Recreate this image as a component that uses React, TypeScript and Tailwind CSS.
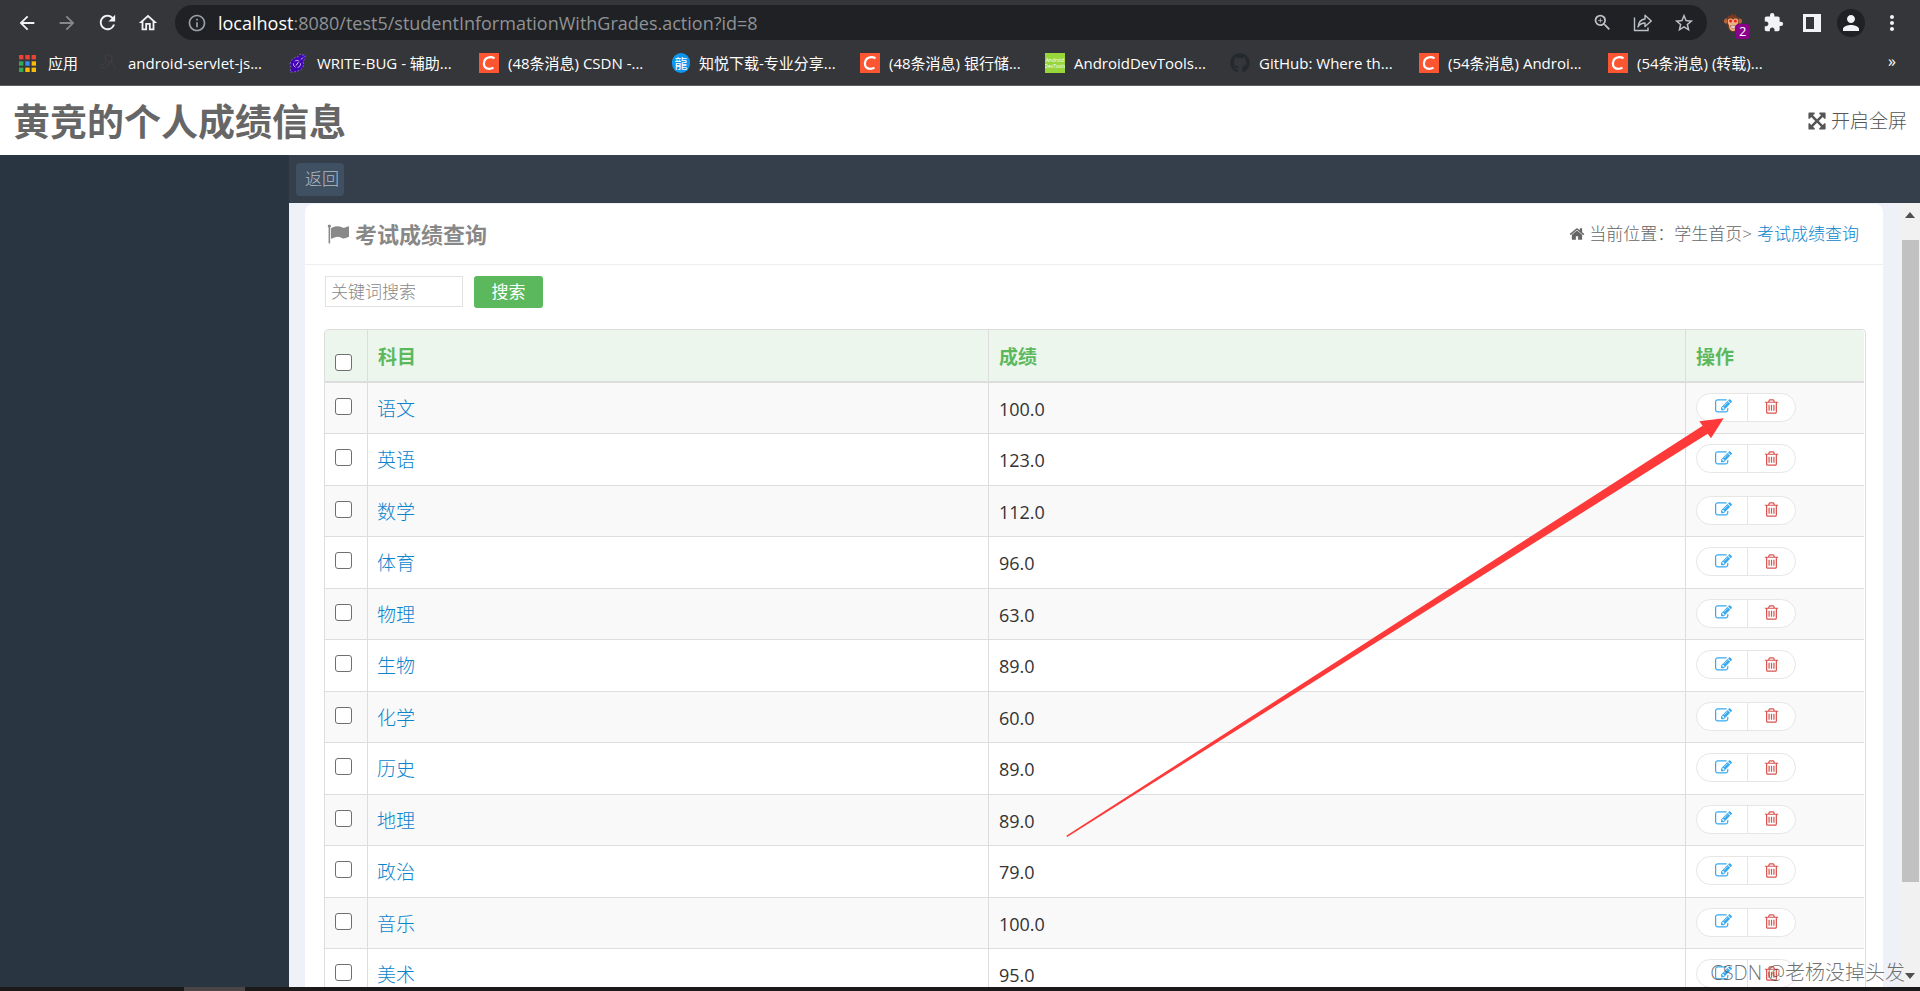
import type { ReactNode } from "react";
import { FaGithub } from "react-icons/fa";
import {
  MdArrowBack,
  MdArrowForward,
  MdExtension,
  MdInfoOutline,
  MdMoreVert,
  MdOutlineHome,
  MdPerson,
  MdRefresh,
  MdStarBorder,
  MdZoomIn,
} from "react-icons/md";

const glyphs = {
  edit: "M888 1184l116-116-152-152-116 116v56h96v96h56zm440-720q-16-16-33 1l-350 350q-17 17-1 33t33-1l350-350q17-17 1-33zm80 594v190q0 119-84.5 203.5t-203.5 84.5h-832q-119 0-203.5-84.5t-84.5-203.5v-832q0-119 84.5-203.5t203.5-84.5h832q63 0 117 25 15 7 18 23 3 17-9 29l-49 49q-14 14-32 8-23-6-45-6h-832q-66 0-113 47t-47 113v832q0 66 47 113t113 47h832q66 0 113-47t47-113v-126q0-13 9-22l64-64q15-15 35-7t20 29zm-96-738l288 288-672 672h-288v-288zm444 132l-92 92-288-288 92-92q28-28 68-28t68 28l152 152q28 28 28 68t-28 68z",
  trash:
    "M704 736v576q0 14-9 23t-23 9h-64q-14 0-23-9t-9-23v-576q0-14 9-23t23-9h64q14 0 23 9t9 23zm256 0v576q0 14-9 23t-23 9h-64q-14 0-23-9t-9-23v-576q0-14 9-23t23-9h64q14 0 23 9t9 23zm256 0v576q0 14-9 23t-23 9h-64q-14 0-23-9t-9-23v-576q0-14 9-23t23-9h64q14 0 23 9t9 23zm128 724v-948h-896v948q0 22 7 40.5t14.5 27 10.5 8.5h832q3 0 10.5-8.5t14.5-27 7-40.5zm-672-1076h448l-48-117q-7-9-17-11h-317q-10 2-17 11zm928 32v64q0 14-9 23t-23 9h-96v948q0 83-47 143.5t-113 60.5h-832q-66 0-113-58.5t-47-141.5v-952h-96q-14 0-23-9t-9-23v-64q0-14 9-23t23-9h309l70-167q15-37 54-63t79-26h320q40 0 79 26t54 63l70 167h309q14 0 23 9t9 23z",
  expand:
    "M1411 541l-355 355 355 355 144-144q29-31 70-14 39 17 39 59v448q0 26-19 45t-45 19h-448q-42 0-59-40-17-39 14-69l144-144-355-355-355 355 144 144q31 30 14 69-17 40-59 40h-448q-26 0-45-19t-19-45v-448q0-42 40-59 39-17 69 14l144 144 355-355-355-355-144 144q-19 19-45 19-12 0-24-5-40-17-40-59v-448q0-26 19-45t45-19h448q42 0 59 40 17 39-14 69l-144 144 355 355 355-355-144-144q-31-30-14-69 17-40 59-40h448q26 0 45 19t19 45v448q0 42-39 59-13 5-25 5-26 0-45-19z",
  home: "M1472 992v480q0 26-19 45t-45 19h-384v-384h-256v384h-384q-26 0-45-19t-19-45v-480q0-1 .5-3t.5-3l575-474 575 474q1 2 1 6zm223-69l-62 74q-8 9-21 11h-3q-13 0-21-7l-692-577-692 577q-12 8-24 7-13-2-21-11l-62-74q-8-10-7-23.5t11-21.5l719-599q32-26 76-26t76 26l244 204v-195q0-14 9-23t23-9h192q14 0 23 9t9 23v408l219 182q10 8 11 21.5t-7 23.5z",
  flag: "M320 256q0 72-64 110v1266q0 13-9.5 22.5t-22.5 9.5h-64q-13 0-22.5-9.5t-9.5-22.5v-1266q-64-38-64-110 0-53 37.5-90.5t90.5-37.5 90.5 37.5 37.5 90.5zm1472 64v763q0 25-12.5 38.5t-39.5 27.5q-215 116-369 116-61 0-123.5-22t-108.5-48-115.5-48-142.5-22q-192 0-464 146-17 9-33 9-26 0-45-19t-19-45v-742q0-32 31-55 21-14 79-43 236-120 421-120 107 0 200 29t219 88q38 19 88 19 54 0 117.5-21t110-47 88-47 54.5-21q26 0 45 19t19 45z",
};

function Glyph({ name, className }: { name: keyof typeof glyphs; className: string }) {
  return (
    <svg viewBox="0 0 1792 1792" fill="currentColor" className={className} aria-hidden="true">
      <path d={glyphs[name]} />
    </svg>
  );
}

function AppsIcon() {
  const colors = ["#ea4335", "#ea4335", "#ea4335", "#34a853", "#4285f4", "#fbbc04", "#34a853", "#fbbc04", "#fbbc04"];
  return (
    <svg viewBox="0 0 17 17" className="size-[17px] shrink-0" aria-hidden="true">
      {colors.map((c, i) => (
        <rect key={i} x={(i % 3) * 6.3} y={Math.floor(i / 3) * 6.3} width="4.4" height="4.4" fill={c} />
      ))}
    </svg>
  );
}

function CsdnIcon() {
  return (
    <svg viewBox="0 0 20 20" className="size-5 shrink-0" aria-hidden="true">
      <rect width="20" height="20" fill="#fc5531" />
      <path d="M15.5 5.3C14 4.3 12.500 4 11 4.100 7.300 4.400 5.200 7 4.900 10.300 4.700 13.600 6.600 15.700 10 15.800c1.700 0 3.200-.4 4.500-1.200" fill="none" stroke="#fff" strokeWidth="2.200" />
    </svg>
  );
}

function FigureIcon() {
  return (
    <svg viewBox="0 0 20 20" className="size-5 shrink-0" fill="none" stroke="#453e3c" aria-hidden="true">
      <circle cx="9.500" cy="5" r="3.500" />
      <path d="M7 8.500 4 12M2 11c-1 5 2 6 6 3l3-5M13 3c1 4-1 6-3 7M10 9c3 0 5 3 6 8" />
    </svg>
  );
}

function BugIcon() {
  return (
    <svg viewBox="0 0 20 20" className="size-5 shrink-0" aria-hidden="true">
      <path d="M2 11C3 6 7 4 10 4l2-3 2 1 3 0 0 4-2 2c2 5-1 9-5 10l-4 1-4 0 1-4z" fill="#4203b5" stroke="#8a7bb5" strokeWidth=".8" strokeDasharray="2 1.500" />
      <circle cx="9" cy="11" r="3.600" fill="none" stroke="#b5a5e0" strokeWidth="1" strokeDasharray="5 2" />
      <path d="M8 12.500 10.500 9M13 6.500l2-2" stroke="#d9cff5" />
    </svg>
  );
}

function DragonIcon() {
  return (
    <span className="grid h-5 w-[18px] shrink-0 place-items-center rounded-full bg-[#0c96ee] text-[13px] leading-none text-white">
      龍
    </span>
  );
}

function DevToolsIcon() {
  return (
    <span className="flex size-5 shrink-0 flex-col items-center justify-center overflow-hidden bg-[#97d73c] text-[5px] leading-[6px] text-white">
      <span>Android</span>
      <span>DevTools</span>
    </span>
  );
}

function ShareIcon() {
  return (
    <svg viewBox="0 0 20 20" className="size-5" fill="none" stroke="currentColor" strokeWidth="1.400" aria-hidden="true">
      <path d="M1.500 4.500v13h13.500v-3" />
      <path d="M5 14c.5-5 3-7.500 7-8V2.200l6.300 5.800-6.300 5.500V10c-3.500 0-5.500 1.200-7 4z" strokeLinejoin="round" />
    </svg>
  );
}

function MonkeyIcon() {
  return (
    <svg viewBox="0 0 20 20" className="size-5" aria-hidden="true">
      <circle cx="3.500" cy="8" r="2.600" fill="#b5643a" />
      <circle cx="16.500" cy="8" r="2.600" fill="#b5643a" />
      <path d="M4 5 6 2l1.500 1L9 .5l1.500 2 2-1.500L13 3l2 1 1 6-2 7-4 2.500L6 17 4 10z" fill="#7a3a1d" />
      <path d="M5 7c1-2 4-2 5 0 1-2 4-2 5 0 1 3-1 4-1 6 0 3-2 5-4 5s-4-2-4-5c0-2-2-3-1-6z" fill="#eeb083" />
      <circle cx="7.600" cy="8" r="1.500" fill="#f01f1f" />
      <circle cx="12.400" cy="8" r="1.500" fill="#f01f1f" />
      <path d="M7 13h6c0 3-5.500 3-6 0z" fill="#fff" stroke="#7a3a1d" strokeWidth=".6" />
    </svg>
  );
}

const bookmarks: { label: string; icon: ReactNode; width: string }[] = [
  { label: "android-servlet-js...", icon: <FigureIcon />, width: "w-[189px]" },
  { label: "WRITE-BUG - 辅助...", icon: <BugIcon />, width: "w-[191px]" },
  { label: "(48条消息) CSDN -...", icon: <CsdnIcon />, width: "w-[193px]" },
  { label: "知悦下载-专业分享...", icon: <DragonIcon />, width: "w-[188px]" },
  { label: "(48条消息) 银行储...", icon: <CsdnIcon />, width: "w-[185px]" },
  { label: "AndroidDevTools...", icon: <DevToolsIcon />, width: "w-[185px]" },
  { label: "GitHub: Where th...", icon: <FaGithub className="size-5 shrink-0 text-[#24292e]" />, width: "w-[189px]" },
  { label: "(54条消息) Androi...", icon: <CsdnIcon />, width: "w-[189px]" },
  { label: "(54条消息) (转载)...", icon: <CsdnIcon />, width: "w-[185px]" },
];

const grades = [
  ["语文", "100.0"],
  ["英语", "123.0"],
  ["数学", "112.0"],
  ["体育", "96.0"],
  ["物理", "63.0"],
  ["生物", "89.0"],
  ["化学", "60.0"],
  ["历史", "89.0"],
  ["地理", "89.0"],
  ["政治", "79.0"],
  ["音乐", "100.0"],
  ["美术", "95.0"],
];

function BrowserBar() {
  return (
    <div className="shrink-0 border-b border-[#5c5d61] bg-[#35363a] text-[#f1f3f4]">
      <div className="flex h-[45px] items-center pr-4 pl-4">
        <div className="flex w-[159px] shrink-0 items-center gap-[18px]">
          <button aria-label="后退"><MdArrowBack className="size-[22px]" /></button>
          <button aria-label="前进" className="text-[#87888b]"><MdArrowForward className="size-[22px]" /></button>
          <button aria-label="刷新"><MdRefresh className="size-[23px]" /></button>
          <button aria-label="主页"><MdOutlineHome className="size-[22px]" /></button>
        </div>
        <div className="flex h-[35px] min-w-0 flex-1 items-center rounded-full bg-[#202124] pr-3 pl-3 text-[#9aa0a6]">
          <MdInfoOutline className="size-5 shrink-0" />
          <div className="min-w-0 flex-1 truncate pl-[11px] text-[18px] leading-6 text-[#8f9296]">
            <span className="text-white">localhost</span>:8080/test5/studentInformationWithGrades.action?id=8
          </div>
          <div className="flex items-center gap-5 text-[#bdc1c6]">
            <button aria-label="缩放"><MdZoomIn className="size-[21px]" /></button>
            <button aria-label="分享"><ShareIcon /></button>
            <button aria-label="收藏"><MdStarBorder className="size-[22px]" /></button>
          </div>
        </div>
        <div className="ml-4 flex shrink-0 items-center">
          <button aria-label="扩展 2" className="relative mr-5">
            <MonkeyIcon />
            <span className="absolute top-[11px] left-[12px] rounded-sm bg-[#8b008b] px-1 text-[13px] leading-[15px] text-white">2</span>
          </button>
          <button aria-label="扩展程序" className="mr-[19px]"><MdExtension className="size-[21px]" /></button>
          <button aria-label="侧边栏" className="mr-4">
            <svg viewBox="0 0 18 18" className="size-[18px]" aria-hidden="true">
              <path fill="currentColor" fillRule="evenodd" d="M0 0h18v18H0zM3 3v12h8V3z" />
            </svg>
          </button>
          <button aria-label="用户" className="mr-[15px] grid size-7 place-items-center rounded-full bg-[#202124]">
            <MdPerson className="size-6" />
          </button>
          <button aria-label="菜单"><MdMoreVert className="size-6" /></button>
        </div>
      </div>
      <nav className="flex h-10 items-center pr-6 pb-1 pl-[19px] text-[15px] leading-5 text-white">
        <a href="#apps" className="flex w-[80px] shrink-0 items-center gap-3 whitespace-nowrap">
          <AppsIcon />
          应用
        </a>
        {bookmarks.map((b) => (
          <a key={b.label} href="#bookmark" className={`flex shrink-0 items-center gap-[9px] whitespace-nowrap ${b.width}`}>
            {b.icon}
            {b.label}
          </a>
        ))}
        <button aria-label="更多书签" className="ml-auto pb-1 text-[16px]">»</button>
      </nav>
    </div>
  );
}

const checkbox =
  "block size-[17px] appearance-none rounded-[3px] border border-[#6f6f6f] bg-white checked:bg-[#1a73e8]";

function GradeTable() {
  return (
    <div className="rounded border border-[#ddd] pr-px">
      <table className="w-full table-fixed border-separate border-spacing-0 text-left">
        <colgroup>
          <col className="w-[43px]" />
          <col className="w-[40.35%]" />
          <col />
          <col className="w-[178px]" />
        </colgroup>
        <thead>
          <tr className="h-[53px] text-[19px] leading-6 text-[#5cb85c]">
            <th className="rounded-tl border-r border-b-2 border-[#ddd] bg-[#ecf6ed] pt-[14px] pl-[10px]">
              <input type="checkbox" aria-label="全选" className={checkbox} />
            </th>
            <th className="border-r border-b-2 border-[#ddd] bg-[#ecf6ed] pt-0.5 pl-[10px]">科目</th>
            <th className="border-r border-b-2 border-[#ddd] bg-[#ecf6ed] pt-0.5 pl-[10px]">成绩</th>
            <th className="rounded-tr border-b-2 border-[#ddd] bg-[#ecf6ed] pt-0.5 pl-[10px]">操作</th>
          </tr>
        </thead>
        <tbody>
          {grades.map(([subject, score]) => (
            <tr key={subject} className="odd:h-[51px] odd:bg-[#f9f9f9] even:h-[52px]">
              <td className="border-r border-b border-[#ddd] pb-1 pl-[10px]">
                <input type="checkbox" aria-label={`选择${subject}`} className={checkbox} />
              </td>
              <td className="border-r border-b border-[#ddd] pt-px pl-[9px] text-[19px] leading-6 font-light">
                <a href="#subject" className="text-[#0a84cd]">{subject}</a>
              </td>
              <td className="border-r border-b border-[#ddd] pt-px pl-[10px] text-[18px] leading-6 text-[#333]">{score}</td>
              <td className="border-b border-[#ddd] pb-0.5 pl-[10px]">
                <div className="flex h-[29px] w-[100px] rounded-full border border-[#e6e6e6] bg-white">
                  <button aria-label={`编辑${subject}`} className="flex w-[51px] items-center justify-center border-r border-[#e6e6e6] pb-px pl-0.5 text-[#36a9f0]">
                    <Glyph name="edit" className="size-[17px]" />
                  </button>
                  <button aria-label={`删除${subject}`} className="flex flex-1 items-center justify-center pb-px text-[#d9534f]">
                    <Glyph name="trash" className="size-[17px]" />
                  </button>
                </div>
              </td>
            </tr>
          ))}
        </tbody>
      </table>
    </div>
  );
}

function ScrollBar() {
  return (
    <div className="flex w-5 shrink-0 flex-col items-center bg-[#f1f1f1] pt-[9px] pb-2" aria-hidden="true">
      <svg viewBox="0 0 10 6" className="h-[6px] w-[10px] shrink-0"><path d="M5 0l5 6H0z" fill="#505050" /></svg>
      <div className="mt-[22px] w-[17px] flex-1 bg-[#c1c1c1]" />
      <svg viewBox="0 0 10 6" className="mt-[91px] h-[6px] w-[10px] shrink-0"><path d="M5 6l5-6H0z" fill="#505050" /></svg>
    </div>
  );
}

export default function App() {
  return (
    <div className="relative flex h-screen flex-col overflow-hidden bg-white font-['Open_Sans','Noto_Sans_CJK_SC',sans-serif]">
      <BrowserBar />
      <header className="flex h-[69px] shrink-0 items-center justify-between px-[13px] text-[#666]">
        <h1 className="pt-0.5 text-[37px] leading-[48px] font-bold">黄竞的个人成绩信息</h1>
        <button className="flex items-center gap-1 text-[19px] leading-6 font-light text-[#555]">
          <Glyph name="expand" className="size-5" />
          开启全屏
        </button>
      </header>
      <div className="flex min-h-0 flex-1">
        <aside className="w-[289px] shrink-0 bg-[#293541]" />
        <div className="flex min-w-0 flex-1 flex-col">
          <div className="flex h-12 shrink-0 items-center bg-[#353f4b] pl-[7px]">
            <button className="h-[33px] w-12 rounded bg-[#3f5062] pl-1 text-[17px] leading-6 font-light text-[#b4bbc2]">返回</button>
          </div>
          <div className="flex min-h-0 flex-1 bg-[#eff1f8]">
            <main className="min-w-0 flex-1 overflow-hidden pt-px pr-[17px] pl-4">
              <section className="rounded-t-lg bg-white">
                <div className="flex h-[61px] items-center justify-between border-b border-[#eee] pr-6 pl-[22px]">
                  <h2 className="flex items-center gap-[6px] text-[22px] leading-8 font-bold text-[#888]">
                    <Glyph name="flag" className="size-[22px]" />
                    考试成绩查询
                  </h2>
                  <div className="flex items-center text-[17px] leading-6 font-light text-[#666]">
                    <Glyph name="home" className="mr-1 size-4" />
                    <span>当前位置：</span>
                    <span className="mr-[5px]">学生首页&gt;</span>
                    <a href="#grades" className="text-[#0a84cd]">考试成绩查询</a>
                  </div>
                </div>
                <form className="flex items-start gap-[11px] px-5 pt-[11px] pb-[21px]">
                  <input
                    type="text"
                    aria-label="关键词搜索"
                    placeholder="关键词搜索"
                    className="h-[31px] w-[138px] border border-[#e2e2e2] px-[5px] text-[17px] font-light placeholder:text-[#888]"
                  />
                  <button type="button" className="h-8 w-[69px] rounded-[3px] bg-[#5cb85c] text-[17px] leading-6 text-white">搜索</button>
                </form>
                <div className="pr-[17px] pl-[19px]">
                  <GradeTable />
                </div>
              </section>
            </main>
            <ScrollBar />
          </div>
        </div>
      </div>
      <footer className="flex h-1 shrink-0 bg-[#1c191a] pl-[184px]">
        <div className="w-[61px] bg-[#4b4645]" />
      </footer>
      <svg viewBox="0 0 660 422" className="pointer-events-none absolute top-[416px] right-[194px] h-[422px] w-[660px]" aria-hidden="true">
        <path d="M.3 419.800 636.700 9.700 633.300 5.300 657.700 2.300 645 22.300 641.700 17.700 1.200 421z" fill="#fd3a39" />
      </svg>
      <div className="pointer-events-none absolute right-[15px] bottom-1 text-[20px] leading-[28px] font-light whitespace-nowrap text-[#444]/75">
        CSDN @老杨没掉头发
      </div>
    </div>
  );
}
